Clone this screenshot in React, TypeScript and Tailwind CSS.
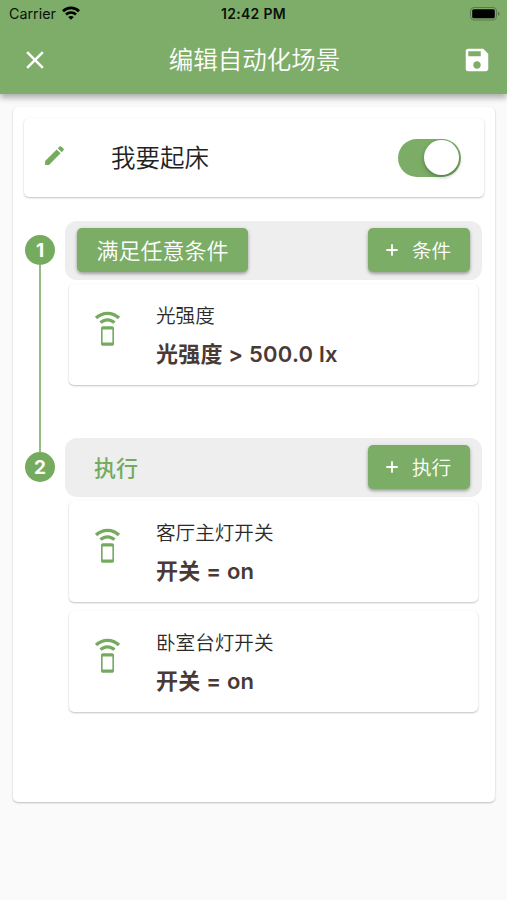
import { useState } from "react";
import type { ReactNode } from "react";
import { MdClose, MdEdit, MdSave, MdSpeakerPhone } from "react-icons/md";

type Item = {
  title: string;
  detail: string;
};

const conditions: Item[] = [{ title: "光强度", detail: "光强度 > 500.0 lx" }];

const actions: Item[] = [
  { title: "客厅主灯开关", detail: "开关 = on" },
  { title: "卧室台灯开关", detail: "开关 = on" },
];

const cardShadow = "shadow-[0_1px_2px_rgba(0,0,0,0.24),0_0_1px_rgba(0,0,0,0.06)]";
const buttonShadow = "shadow-[0_2px_3px_rgba(0,0,0,0.26),0_1px_5px_rgba(0,0,0,0.12)]";

function StatusBar() {
  return (
    <div className="grid h-[25px] grid-cols-3 items-center pt-[3px] text-[#0c110a]">
      <div className="flex items-center gap-[6px] pl-[9px] text-[14.3px] font-normal leading-5">
        Carrier
        <svg width="18" height="14" viewBox="0 0 18 14" fill="none" stroke="#000" strokeWidth="2.7" className="-mt-[2px]">
          <path d="M1 5.2C5.5.7 12.5.7 17 5.2" />
          <path d="M4 8.5C6.8 5.8 11.2 5.8 14 8.5" />
          <path d="M9 13.8 6.2 11C7.7 9.5 10.3 9.5 11.8 11z" fill="#000" stroke="none" />
        </svg>
      </div>
      <div className="whitespace-nowrap text-center text-[14px] font-semibold leading-5 tracking-[0.3px]">12:42 PM</div>
      <div className="flex justify-end pr-[7px]">
        <svg width="30" height="14" viewBox="0 0 30 14" className="-mt-[1px]">
          <rect x="0.5" y="0.5" width="26" height="12.5" rx="3.5" fill="none" stroke="#5a7a4c" />
          <rect x="2.2" y="2.2" width="22.6" height="9.1" rx="1.6" fill="#000" />
          <path d="M28 4.7c2 .8 2 3.3 0 4.1z" fill="#4f6c43" />
        </svg>
      </div>
    </div>
  );
}

function AddButton({ label }: { label: string }) {
  return (
    <button className={`flex h-11 w-[102px] items-center rounded-[5px] bg-[#7bad67] pl-[18px] text-[19.6px] text-white ${buttonShadow}`}>
      <svg width="12" height="12" viewBox="0 0 12 12" stroke="currentColor" strokeWidth="1.8">
        <path d="M6 .3v11.4M.3 6h11.4" />
      </svg>
      <span className="ml-[14px] pt-[4px] leading-none">{label}</span>
    </button>
  );
}

function ItemCard({ item }: { item: Item }) {
  return (
    <div className={`mx-1 flex h-[101px] rounded-[5px] bg-white ${cardShadow}`}>
      <MdSpeakerPhone size={39} className="ml-[19px] mt-[26px] shrink-0 text-[#74ab5e]" />
      <div className="ml-[29px] pt-[18px]">
        <p className="text-[19.6px] leading-[29px] text-[#2b2b2b]">{item.title}</p>
        <p className="mt-[7px] text-[22px] font-semibold leading-[32px] tracking-[0.2px] text-[#4a3a36]">{item.detail}</p>
      </div>
    </div>
  );
}

function Step({ number, last, header, items }: { number: number; last?: boolean; header: ReactNode; items: Item[] }) {
  return (
    <div className="flex">
      <div className="flex w-[30px] shrink-0 flex-col items-center">
        <div className={last ? "h-[14px] w-[1.5px] bg-[#93bb83]" : "h-[14px]"} />
        <div className="flex h-[30px] w-[30px] shrink-0 items-center justify-center rounded-full bg-[#74ab5e] text-[19px] font-bold leading-none text-white">
          {number}
        </div>
        {!last ? <div className="w-[1.5px] flex-1 bg-[#93bb83]" /> : null}
      </div>
      <div className={`ml-[10px] w-[417px] ${last ? "" : "pb-[53px]"}`}>
        <div className="flex h-[59px] items-center justify-between rounded-[12px] bg-[#eeeeee] px-3 pb-[1px]">{header}</div>
        <div className="mt-1 flex flex-col gap-[9px]">
          {items.map((item) => (
            <ItemCard key={item.title} item={item} />
          ))}
        </div>
      </div>
    </div>
  );
}

export default function App() {
  const [enabled, setEnabled] = useState(true);

  return (
    <div className="min-h-screen bg-[#fafafa] font-[Inter,'Noto_Sans_CJK_SC',sans-serif] font-[350]">
      <header className="h-[94px] bg-[#7ead69] shadow-[0_4px_6px_rgba(0,0,0,0.3)]">
        <StatusBar />
        <div className="flex h-[69px] items-center justify-between pl-[20px] pr-[15px]">
          <MdClose size={30} className="text-white" />
          <h1 className="-ml-[3px] pt-[2px] text-[24.5px] font-[350] leading-none text-white">编辑自动化场景</h1>
          <MdSave size={30} className="text-white" />
        </div>
      </header>

      <main className={`ml-[13px] mt-[13px] h-[695px] w-[482px] rounded-[5px] bg-white pt-[11px] ${cardShadow}`}>
        <div className={`mx-[11px] flex h-[79px] items-center rounded-[5px] bg-white ${cardShadow}`}>
          <MdEdit size={25} className="-mt-[4px] ml-[18px] text-[#74ab5e]" />
          <span className="ml-[44px] flex-1 pt-[2px] text-[24.5px] leading-none text-[#222222]">我要起床</span>
          <button
            role="switch"
            aria-checked={enabled}
            onClick={() => setEnabled(!enabled)}
            className={`mr-[23px] flex h-[38px] w-[63px] items-center rounded-full px-[2px] ${enabled ? "justify-end bg-[#7bad67]" : "justify-start bg-gray-300"}`}
          >
            <span className="h-[35px] w-[35px] rounded-full bg-white shadow-[0_2px_4px_rgba(0,0,0,0.3)]" />
          </button>
        </div>

        <div className="ml-[12px] mt-[24px]">
          <Step
            number={1}
            items={conditions}
            header={
              <>
                <button className={`h-11 w-[171px] rounded-[5px] bg-[#7bad67] pt-[2px] text-[22px] leading-none text-white ${buttonShadow}`}>
                  满足任意条件
                </button>
                <AddButton label="条件" />
              </>
            }
          />
          <Step
            number={2}
            last
            items={actions}
            header={
              <>
                <span className="ml-[17px] pt-[2px] text-[22px] font-medium leading-none text-[#74ab5e]">执行</span>
                <AddButton label="执行" />
              </>
            }
          />
        </div>
      </main>
    </div>
  );
}
